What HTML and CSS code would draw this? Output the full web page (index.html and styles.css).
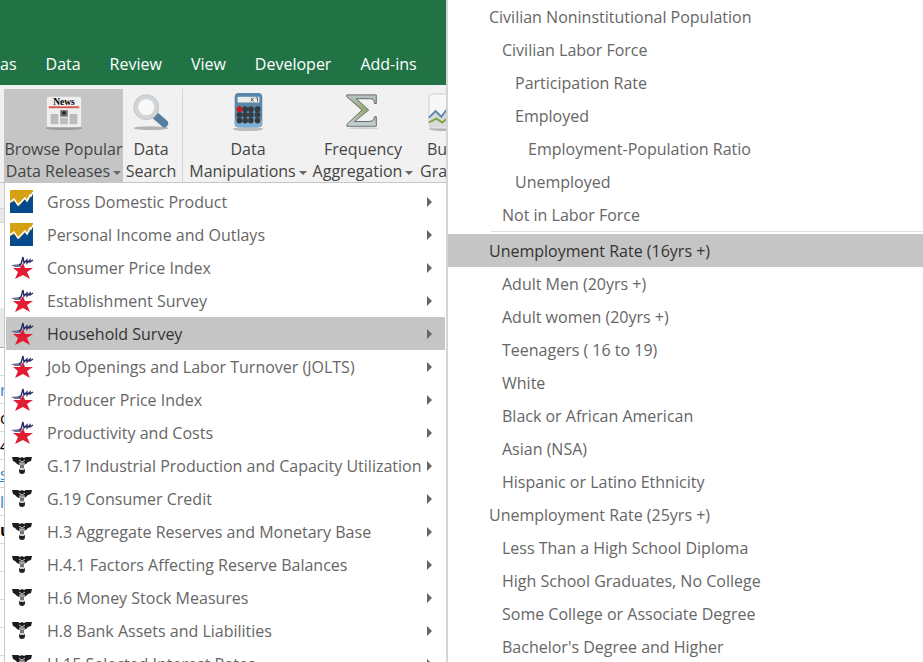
FILE: index.html
```
<!DOCTYPE html>
<html lang="en">
  <head>
    <meta charset="UTF-8" />
    <meta name="viewport" content="width=device-width, initial-scale=1.0" />
    <title>Data Releases</title>
    <link rel="stylesheet" href="styles.css">
  </head>
  <body>
    <!-- icons shared by the menu rows -->
    <svg class="symbols" aria-hidden="true">
      <symbol id="bea" viewBox="0 0 24 24">
        <path d="M0 1h23v23H0z" fill="#d6a013"/>
        <path d="M0 14l5-2 4 5 6-7 3 2 5-8v20H0z" fill="#064a8c"/>
        <path d="M0 13l4-3 4 6 7-7 2 3 3-6 1 1 2-4" fill="none" stroke="#fff" stroke-width="1.5"/>
      </symbol>
      <symbol id="bls" viewBox="0 0 24 24">
        <path d="M13 8l2 5h8l-6 4 3 7-7-4-8 4 3-7-5-4h7z" fill="#e21c32"/>
        <path d="M1 10l10-1v3H5z" fill="#6c6f94"/>
        <path d="M9 10l2-1 2-7 1 6 3-3v3l3-3v2l3-2" fill="none" stroke="#262b66" stroke-width="1.4"/>
      </symbol>
      <symbol id="fed" viewBox="0 0 24 24">
        <path d="M2 4h6l2 1 2-1 2 1 2-1h6l-1 4-3 1-2 2-3 1H9l-2-1-2-2-2-1z" fill="#1c1c1e"/>
        <path d="M9 9h6l-1 4v4h-4v-4z" fill="#777"/>
        <path d="M9 7l3 2 3-2M9 11h6" stroke="#ccc" fill="none"/>
        <circle cx="12" cy="18" r="3" fill="#222"/>
        <path d="M10 16h4" stroke="#ccc" stroke-width="2"/>
      </symbol>
    </svg>

    <nav class="tabs">
      <a href="#">as</a>
      <a href="#">Data</a>
      <a href="#">Review</a>
      <a href="#">View</a>
      <a href="#">Developer</a>
      <a href="#">Add-ins</a>
    </nav>

    <div class="ribbon">
      <button class="tool browse active">
        <svg viewBox="0 0 40 40">
          <ellipse cx="20" cy="37" rx="19" ry="2" fill="#999"/>
          <rect x="2" y="4" width="36" height="32" rx="2" fill="#eee"/>
          <text x="20" y="13" class="news">News</text>
          <path d="M4 15h32" stroke="#d9534f" stroke-width="2"/>
          <path d="M6 22h8v11H6zM16 26h8v7h-8zM26 22h8v11h-8z" fill="#bcbcbc"/>
          <path d="M16 18h8v7h-8z" fill="#777"/>
          <circle cx="20" cy="21" r="2" fill="#222"/>
        </svg>
        <span>Browse Popular<br>Data Releases<i class="caret"></i></span>
      </button>
      <button class="tool search">
        <svg viewBox="0 0 40 40">
          <ellipse cx="20" cy="37" rx="18" ry="2" fill="#b5b5b5"/>
          <path d="M25 24l9 8" stroke="#567f9f" stroke-width="8" stroke-linecap="round"/>
          <circle cx="15" cy="15" r="11" fill="#f8f8f8" stroke="#d2d5d7" stroke-width="5"/>
          <circle cx="15" cy="15" r="13" fill="none" stroke="#c3c7ca" stroke-width="1"/>
        </svg>
        <span>Data<br>Search</span>
      </button>
      <div class="divider"></div>
      <button class="tool manipulate">
        <svg viewBox="0 0 40 40">
          <ellipse cx="20" cy="38" rx="16" ry="2" fill="#bbb"/>
          <rect x="6" y="0" width="29" height="36" rx="4" fill="#5b86a8"/>
          <rect x="6" y="27" width="29" height="9" rx="4" fill="#7eaed3"/>
          <rect x="9" y="4" width="23" height="6" fill="#ececec"/>
          <path d="M23 5l3 4M26 5l-3 4M28 5h2v4" stroke="#555" fill="none"/>
          <g fill="#343a40">
            <circle cx="17" cy="17" r="3"/><circle cx="23" cy="17" r="3"/><circle cx="30" cy="17" r="3"/>
            <circle cx="11" cy="23" r="3"/><circle cx="17" cy="23" r="3"/><circle cx="23" cy="23" r="3"/><circle cx="30" cy="23" r="3"/>
            <circle cx="11" cy="29" r="3"/><circle cx="17" cy="29" r="3"/><circle cx="23" cy="29" r="3"/><circle cx="30" cy="29" r="3"/>
          </g>
          <circle cx="11" cy="17" r="3" fill="#c8191e"/>
        </svg>
        <span>Data<br>Manipulations<i class="caret"></i></span>
      </button>
      <button class="tool frequency">
        <svg viewBox="0 0 40 40">
          <defs>
            <linearGradient id="metal" x1="0" y1="0" x2="0" y2="1">
              <stop offset="0" stop-color="#b9c4cc"/>
              <stop offset=".45" stop-color="#93ab70"/>
              <stop offset="1" stop-color="#c6d3dc"/>
            </linearGradient>
          </defs>
          <ellipse cx="20" cy="37" rx="16" ry="1" fill="#ccc"/>
          <path d="M3 2h31v9h-2c0-4-2-5-6-5H13l13 12-15 12h15c4 0 6-2 6-5h2v10H3v-2l16-15L3 4z" fill="url(#metal)" stroke="#666"/>
        </svg>
        <span>Frequency<br>Aggregation<i class="caret"></i></span>
      </button>
      <button class="tool graphs">
        <svg viewBox="0 0 40 40">
          <ellipse cx="20" cy="38" rx="19" ry="2" fill="#b5b5b5"/>
          <rect x="1" y="1" width="38" height="36" rx="4" fill="#f7f7f7" stroke="#ccc"/>
          <path d="M2 26l7-7 5 6 6-8 18 8v11H2z" fill="#dadada"/>
          <path d="M1 26l7-7 6 6 6-8 9 8 9-8" fill="none" stroke="#5b86a8" stroke-width="2"/>
          <path d="M1 31l8-4 6 4 6-5 9 5 8-4" fill="none" stroke="#7da744" stroke-width="2"/>
        </svg>
        <span>Bu<br>Gra</span>
      </button>
    </div>

    <main class="sheet">
      <div class="formula-bar"></div>
      <div class="title-row"></div>
      <div class="column-heads"></div>
      <div class="cell"></div>
      <div class="cell blue">r</div>
      <div class="cell">o</div>
      <div class="cell">4</div>
      <div class="cell link"><a href="#">s</a></div>
      <div class="cell blue">l</div>
      <div class="cell bold">u</div>
      <div class="cell"></div>
      <div class="cell"></div>
      <div class="cell"></div>
      <div class="cell"></div>
      <div class="cell"></div>
    </main>

    <div class="menu releases" id="releases"></div>
    <div class="menu series" id="series"></div>

    <script src="script.js"></script>
  </body>
</html>
```

FILE: styles.css
```
* {
  box-sizing: border-box;
}

body {
  margin: 0;
  height: 100vh;
  overflow: hidden;
  display: flex;
  flex-direction: column;
  position: relative;
  background-color: white;
  font-family: "Open Sans", "Noto Sans", sans-serif;
  font-size: 16px;
}

button {
  font: inherit;
  border: none;
  background: none;
  padding: 0;
}

.symbols {
  display: none;
}

.tabs {
  flex: none;
  display: flex;
  align-items: flex-end;
  gap: 29px;
  height: 85px;
  padding-bottom: 10px;
  background-color: #217346;
}

.tabs a {
  color: white;
  text-decoration: none;
  line-height: 22px;
}

.ribbon {
  flex: none;
  display: flex;
  height: 98px;
  padding: 4px 0 0 4px;
  overflow: hidden;
  background-color: #f1f1f1;
  border-bottom: 1px solid #c6c6c6;
}

.tool {
  flex: none;
  display: flex;
  flex-direction: column;
  align-items: center;
  padding-top: 4px;
  color: #444;
  line-height: 22px;
  white-space: nowrap;
}

.tool svg {
  width: 40px;
  height: 40px;
  margin-bottom: 7px;
}

.tool.active {
  background-color: #c5c5c5;
}

.browse {
  width: 119px;
}

.search {
  width: 56px;
}

.manipulate {
  width: 124px;
}

.frequency {
  width: 106px;
}

.graphs {
  align-items: flex-start;
  padding-left: 11px;
}

.graphs span {
  margin-left: -7px;
  text-align: right;
}

.news {
  font-family: "Liberation Serif", serif;
  font-size: 10px;
  font-weight: bold;
  text-anchor: middle;
}

.divider {
  width: 1px;
  margin: 0 3px;
  background-color: #d5d5d5;
}

.caret {
  display: inline-block;
  margin-left: 3px;
  border: 4px solid transparent;
  border-top-color: #666;
  border-bottom: none;
  vertical-align: middle;
}

.sheet {
  flex: 1;
  overflow: hidden;
}

.formula-bar {
  height: 26px;
  background-color: #f1f1f1;
  border-bottom: 1px solid #d5d5d5;
}

.title-row {
  height: 14px;
  background-color: #e9e9e9;
  border-bottom: 1px solid #d5d5d5;
}

.column-heads {
  height: 125px;
  background: linear-gradient(white 85px, #e9e9e9 85px);
  border-bottom: 1px solid #aaa;
}

.cell {
  height: 28px;
  border-bottom: 1px solid #d5d5d5;
  line-height: 28px;
}

.blue,
.link a {
  color: #2a82d0;
}

.bold {
  font-weight: bold;
}

.menu {
  position: absolute;
  background-color: white;
  overflow: hidden;
}

.releases {
  top: 182px;
  bottom: 0;
  left: 4px;
  width: 443px;
  padding: 2px 1px 0;
  border: 1px solid #c6c6c6;
  border-bottom: none;
}

.series {
  top: 0;
  right: 0;
  bottom: 0;
  left: 446px;
  border-left: 2px solid #d5d5d5;
}

.item {
  display: flex;
  align-items: center;
  width: 100%;
  height: 33px;
  color: #666;
  text-align: left;
  white-space: nowrap;
}

.item.active {
  background-color: #c5c5c5;
  color: #333;
}

.releases .item {
  padding: 1px 13px 0 4px;
}

.releases .item svg {
  width: 24px;
  height: 24px;
  margin: 0 13px 3px 0;
}

.arrow {
  margin-left: auto;
  border: 5px solid transparent;
  border-left-color: #666;
  border-right: none;
}

.series .item {
  padding-left: 41px;
}

.series .level-1 {
  padding-left: 54px;
}

.series .level-2 {
  padding-left: 67px;
}

.series .level-3 {
  padding-left: 80px;
}

.separator {
  height: 1px;
  margin: 0 0 2px 43px;
  background-color: #dde1e1;
}
```

FILE: script.js
```
let releases = [
  ["bea", "Gross Domestic Product"],
  ["bea", "Personal Income and Outlays"],
  ["bls", "Consumer Price Index"],
  ["bls", "Establishment Survey"],
  ["bls", "Household Survey"],
  ["bls", "Job Openings and Labor Turnover (JOLTS)"],
  ["bls", "Producer Price Index"],
  ["bls", "Productivity and Costs"],
  ["fed", "G.17 Industrial Production and Capacity Utilization"],
  ["fed", "G.19 Consumer Credit"],
  ["fed", "H.3 Aggregate Reserves and Monetary Base"],
  ["fed", "H.4.1 Factors Affecting Reserve Balances"],
  ["fed", "H.6 Money Stock Measures"],
  ["fed", "H.8 Bank Assets and Liabilities"],
  ["fed", "H.15 Selected Interest Rates"]
];

// indent level, label
let series = [
  [0, "Civilian Noninstitutional Population"],
  [1, "Civilian Labor Force"],
  [2, "Participation Rate"],
  [2, "Employed"],
  [3, "Employment-Population Ratio"],
  [2, "Unemployed"],
  [1, "Not in Labor Force"],
  null,
  [0, "Unemployment Rate (16yrs +)"],
  [1, "Adult Men (20yrs +)"],
  [1, "Adult women (20yrs +)"],
  [1, "Teenagers ( 16 to 19)"],
  [1, "White"],
  [1, "Black or African American"],
  [1, "Asian (NSA)"],
  [1, "Hispanic or Latino Ethnicity"],
  [0, "Unemployment Rate (25yrs +)"],
  [1, "Less Than a High School Diploma"],
  [1, "High School Graduates, No College"],
  [1, "Some College or Associate Degree"],
  [1, "Bachelor's Degree and Higher"]
];

let left = "";
for (let [icon, name] of releases) {
  let active = name === "Household Survey" ? " active" : "";
  left += `<button class="item${active}"><svg><use href="#${icon}"/></svg>${name}<i class="arrow"></i></button>`;
}
document.getElementById("releases").innerHTML = left;

let right = "";
for (let row of series) {
  if (!row) {
    right += `<div class="separator"></div>`;
    continue;
  }
  let active = row[1] === "Unemployment Rate (16yrs +)" ? " active" : "";
  right += `<button class="item level-${row[0]}${active}">${row[1]}</button>`;
}
document.getElementById("series").innerHTML = right;
```
